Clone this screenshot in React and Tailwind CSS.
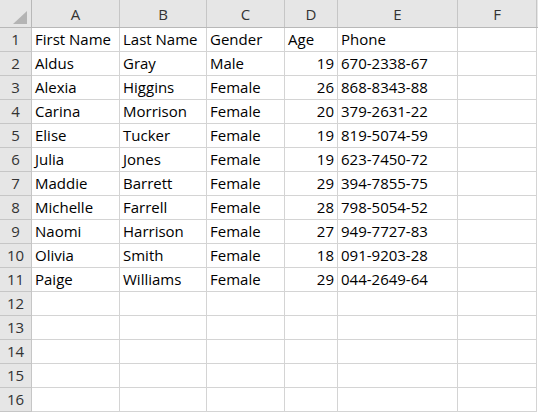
import React from 'react'

const cols = ['A', 'B', 'C', 'D', 'E', 'F']
const widths = ['w-[88px]', 'w-[87px]', 'w-[78px]', 'w-[53px]', 'w-[120px]', 'w-[79px]']

const rows = [
  ['First Name', 'Last Name', 'Gender', 'Age', 'Phone'],
  ['Aldus', 'Gray', 'Male', '19', '670-2338-67'],
  ['Alexia', 'Higgins', 'Female', '26', '868-8343-88'],
  ['Carina', 'Morrison', 'Female', '20', '379-2631-22'],
  ['Elise', 'Tucker', 'Female', '19', '819-5074-59'],
  ['Julia', 'Jones', 'Female', '19', '623-7450-72'],
  ['Maddie', 'Barrett', 'Female', '29', '394-7855-75'],
  ['Michelle', 'Farrell', 'Female', '28', '798-5054-52'],
  ['Naomi', 'Harrison', 'Female', '27', '949-7727-83'],
  ['Olivia', 'Smith', 'Female', '18', '091-9203-28'],
  ['Paige', 'Williams', 'Female', '29', '044-2649-64'],
]

export default function App() {
  const all = Array.from({ length: 16 }, (_, i) => rows[i] || [])
  return (
    <div className="w-[538px] h-[412px] overflow-hidden bg-white text-[15px] text-black" style={{ fontFamily: '"Open Sans", "Liberation Sans", sans-serif' }}>
      <div className="flex h-[28px] bg-[#e6e6e6] border-b border-[#b8b8b8]">
        <div className="w-[32px] shrink-0 border-r border-[#b8b8b8] relative">
          <div className="absolute right-[4px] bottom-[3px] w-0 h-0 border-l-[14px] border-l-transparent border-b-[13px] border-b-[#b4b4b4]" />
        </div>
        {cols.map((c, i) => (
          <div key={c} className={`${widths[i]} shrink-0 border-r border-[#c6c6c6] flex items-center justify-center text-[#333] leading-none pt-[1px]`}>
            {c}
          </div>
        ))}
      </div>
      {all.map((r, ri) => (
        <div key={ri} className="flex h-[24px]">
          <div className="w-[32px] shrink-0 bg-[#e6e6e6] border-r border-b border-[#c6c6c6] flex items-center justify-center text-[#333]">
            {ri + 1}
          </div>
          {cols.map((c, ci) => (
            <div
              key={c}
              className={`${widths[ci]} shrink-0 border-r border-b border-[#d4d4d4] flex items-center px-[3px] whitespace-nowrap overflow-visible ${ci === 3 && ri > 0 ? 'justify-end' : ''}`}
            >
              {r[ci] || ''}
            </div>
          ))}
        </div>
      ))}
    </div>
  )
}
